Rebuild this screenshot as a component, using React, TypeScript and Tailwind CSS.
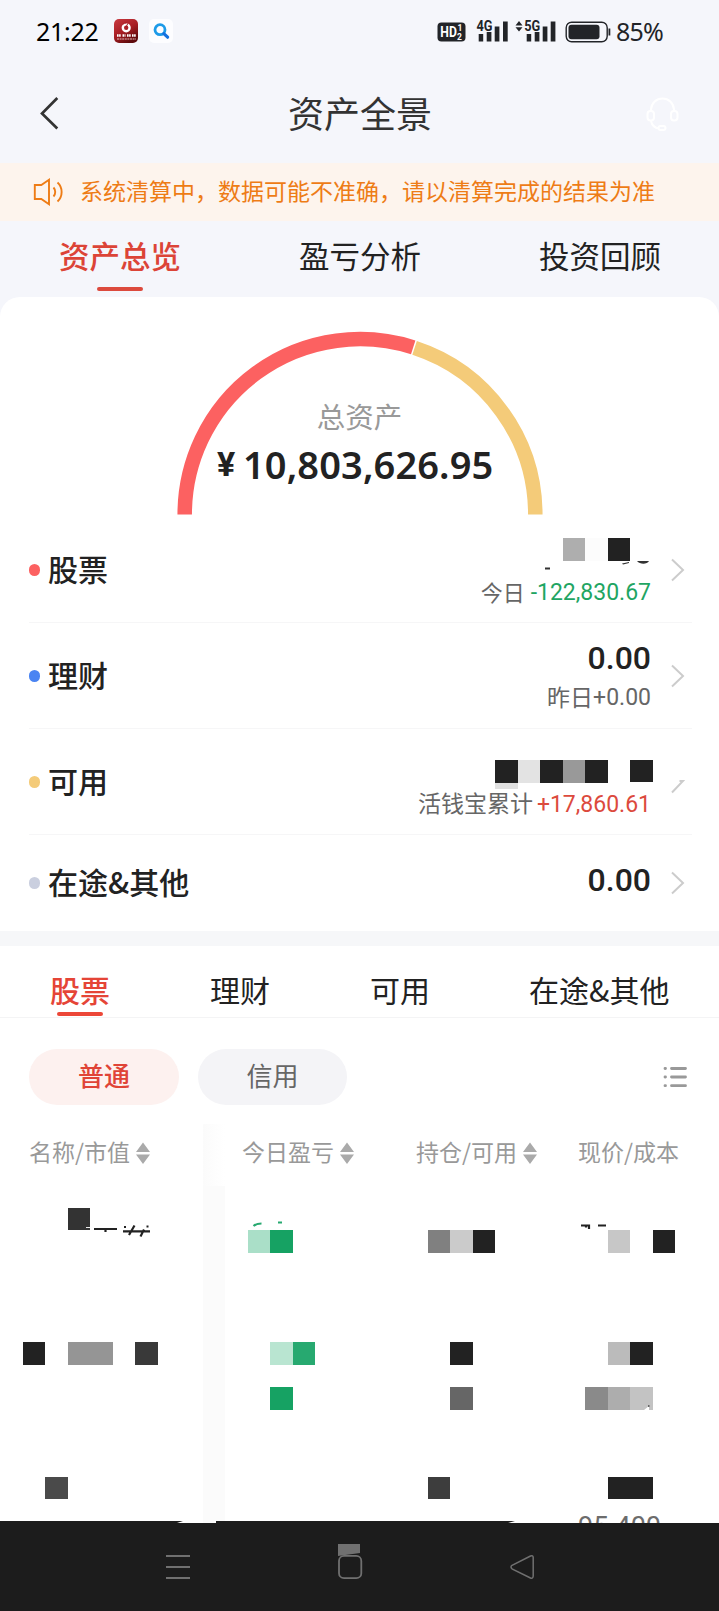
import type { ReactNode } from 'react'
import clsx from 'clsx'

const TABS = ['资产总览', '盈亏分析', '投资回顾']

// Masked figures are drawn as strips of blocks
const MASK_ROWS = [
  {
    row: 'mt-[29px] h-[22px]',
    blocks: ['ml-[68px] w-[22px] bg-[#333333]'],
  },
  {
    row: 'h-[23px]',
    blocks: [
      'ml-[248px] w-[22px] bg-[#aadfc8]',
      'w-[23px] bg-[#16a263]',
      'ml-[135px] w-[22px] bg-[#808080]',
      'w-[23px] bg-[#cbcbcb]',
      'w-[22px] bg-[#222222]',
      'ml-[113px] w-[22px] bg-[#c7c7c7]',
      'ml-[23px] w-[22px] bg-[#222222]',
    ],
  },
  {
    row: 'mt-[89px] h-[23px]',
    blocks: [
      'ml-[23px] w-[22px] bg-[#222222]',
      'ml-[23px] w-[45px] bg-[#959595]',
      'ml-[22px] w-[23px] bg-[#393939]',
      'ml-[112px] w-[23px] bg-[#b9e5d1]',
      'w-[22px] bg-[#27a970]',
      'ml-[135px] w-[23px] bg-[#222222]',
      'ml-[135px] w-[22px] bg-[#bbbbbb]',
      'w-[23px] bg-[#222222]',
    ],
  },
  {
    row: 'mt-[22px] h-[23px]',
    blocks: [
      'ml-[270px] w-[23px] bg-[#16a263]',
      'ml-[157px] w-[23px] bg-[#666666]',
      'ml-[112px] w-[23px] bg-[#8a8a8a]',
      'w-[22px] bg-[#adadad]',
      'w-[23px] bg-[#c3c3c3]',
    ],
  },
  {
    row: 'mt-[67px] h-[22px]',
    blocks: [
      'ml-[45px] w-[23px] bg-[#4a4a4a]',
      'ml-[360px] w-[22px] bg-[#3d3d3d]',
      'ml-[158px] w-[45px] bg-[#222222]',
    ],
  },
]

function StatusBar() {
  return (
    <div className="flex h-[62px] items-center pl-[36px]">
      <span className="w-[78px] whitespace-nowrap text-[25px] leading-none tracking-[-0.3px] text-black font-['Noto_Sans','Noto_Sans_CJK_SC',sans-serif]">21:22</span>
      <svg width="24" height="24" viewBox="0 0 24 24" className="shrink-0">
        <defs>
          <linearGradient id="appRed" x1="0" y1="0" x2="0.6" y2="1">
            <stop offset="0" stopColor="#c93a40" />
            <stop offset="0.55" stopColor="#a81e24" />
            <stop offset="1" stopColor="#5e0a0c" />
          </linearGradient>
        </defs>
        <rect width="24" height="24" rx="5" fill="url(#appRed)" />
        <circle cx="12.2" cy="8.8" r="3.4" fill="none" stroke="#fff" strokeWidth="2.4" />
        <path d="M8.6 5.5a5 5 0 0 1 4-1.6M12 8l2-3.8" stroke="#a81e24" strokeWidth="1" fill="none" />
        <path d="M3 16.5h4M8.5 16.5h3M13 16.5h4M18 16.5h4" stroke="#fff" strokeWidth="2.6" strokeDasharray="1.6 0.5" />
        <path d="M3 20h19" stroke="#e8b8b8" strokeWidth="1" strokeDasharray="2 0.6" />
      </svg>
      <svg width="24" height="24" viewBox="0 0 24 24" className="ml-[11px] shrink-0">
        <rect width="24" height="24" rx="5" fill="#fdfdff" />
        <circle cx="11" cy="10.7" r="5" fill="none" stroke="#1e9be8" strokeWidth="2.8" />
        <path d="M14.8 14.6l3.8 3.6" stroke="#1471e0" strokeWidth="3.2" strokeLinecap="round" />
      </svg>
      <svg width="175" height="30" viewBox="0 0 175 30" className="mt-px ml-[264px] shrink-0" fill="#222428" fontFamily="Roboto, sans-serif">
        <rect x="0.5" y="5.5" width="28" height="19" rx="4" />
        <text x="3.3" y="20.3" fontSize="15" fontWeight="700" fill="#fff" textLength="16.5" lengthAdjust="spacingAndGlyphs">HD</text>
        <text x="20.5" y="14.3" fontSize="8.5" fontWeight="700" fill="#fff">1</text>
        <text x="20" y="23" fontSize="8.5" fontWeight="700" fill="#fff">2</text>
        <text x="39.5" y="13.5" fontSize="14" fontWeight="700" textLength="16" lengthAdjust="spacingAndGlyphs">4G</text>
        <rect x="41.7" y="17" width="4.5" height="7.5" />
        <rect x="49.7" y="15" width="4.7" height="9.5" />
        <rect x="57.7" y="9.5" width="4.7" height="15" />
        <rect x="66" y="4.5" width="4.7" height="20" />
        <path d="M78.5 8.5L82 4l3.500 4.500zM78.500 10.200L82 14.500l3.500-4.300z" />
        <text x="87.3" y="13.5" fontSize="14" fontWeight="700" textLength="16" lengthAdjust="spacingAndGlyphs">5G</text>
        <rect x="89.7" y="17" width="4.5" height="7.5" />
        <rect x="97.7" y="15" width="4.7" height="9.5" />
        <rect x="105.7" y="9.5" width="4.7" height="15" />
        <rect x="113.7" y="4.5" width="4.7" height="20" />
        <rect x="129.2" y="5.2" width="41" height="19.6" rx="5.5" fill="none" stroke="#222428" strokeWidth="1.4" />
        <rect x="131.500" y="7.700" width="31" height="14.500" rx="3" />
        <rect x="171.500" y="11.500" width="1.800" height="7" />
      </svg>
      <span className="ml-[4px] text-[25px] leading-none tracking-[-0.8px] text-[#222428] font-['Noto_Sans',sans-serif]">85%</span>
    </div>
  )
}

function Header() {
  return (
    <div className="mt-[2px] flex h-[99px] items-center justify-between pr-[39px] pl-[40px]">
      <svg width="34" height="34" viewBox="0 0 34 34" fill="none" stroke="#333" strokeWidth="2.7">
        <path d="M17.3 1L2 16.5L17.3 31.5" />
      </svg>
      <h1 className="pb-[4px] text-[36px] leading-none text-[#333333]">资产全景</h1>
      <svg width="34" height="34" viewBox="0 0 34 34" fill="none" stroke="#fff" strokeWidth="2">
        <path d="M5 14V12.5C5.5 6 10.5 1.5 16.5 1.5S27.5 6 28 12.5V14" />
        <rect x="1.5" y="14" width="6.5" height="9.5" rx="3" />
        <rect x="25" y="14" width="6.5" height="9.5" rx="3" />
        <path d="M5 24c1 4.5 4 7 8 7.5" />
        <rect x="12.5" y="29" width="7" height="4" rx="2" />
      </svg>
    </div>
  )
}

function Notice() {
  return (
    <div className="flex h-[58px] items-center bg-[#fdf4ed] pl-[33px] text-[#ee7c16]">
      <svg width="32" height="28" viewBox="0 0 32 28" fill="none" stroke="currentColor" strokeWidth="1.9">
        <path d="M1.8 7h6.500L16 1.800v24.400L8.300 21H1.800z" />
        <path d="M20.5 9.5c2.300 2.500 2.300 6.500 0 9M24.500 4.500c5.500 5 5.500 14 0 19" />
      </svg>
      <span className="ml-[15px] pb-[4px] whitespace-nowrap text-[23px] leading-none">系统清算中，数据可能不准确，请以清算完成的结果为准</span>
    </div>
  )
}

function AssetGauge() {
  return (
    <div className="relative h-[220px]">
      <svg width="719" height="220" viewBox="0 0 719 220" fill="none" strokeWidth="14.5">
        <path d="M184.7 217.5A175.3 175.3 0 0 1 413.2 50.4" stroke="#fc6161" />
        <path d="M414.6 50.9A175.3 175.3 0 0 1 535.3 217.500" stroke="#f4cb79" />
      </svg>
      <div className="absolute inset-x-0 top-[104px] text-center text-[28.5px] leading-[30px] text-[#999999]">总资产</div>
      <div className="absolute top-[145px] left-[217px] flex items-baseline whitespace-nowrap leading-[44px] font-semibold text-[#222222]">
        <span className="relative -top-[3px] w-[26px] text-[34px] font-bold tracking-tight font-['Roboto',sans-serif]">¥</span>
        <span className="text-[38px] tracking-[0.1px] font-['Noto_Sans',sans-serif]">10,803,626.95</span>
      </div>
    </div>
  )
}

function Chevron({ cut = false }: { cut?: boolean }) {
  return (
    <svg width="14" height="24" viewBox="0 0 14 24" fill="none" stroke="#cccccc" strokeWidth="2">
      <path d={cut ? 'M8.5 11h3.500L1 22.500' : 'M1 1.500L12 12L1 22.500'} />
    </svg>
  )
}

function AssetRow({ label, dot, last, cut, children }: {
  label: string
  dot: string
  last?: boolean
  cut?: boolean
  children: ReactNode
}) {
  return (
    <div className={clsx('mr-[27px] ml-[29px] flex items-center', last ? 'h-[96px]' : 'h-[106px] border-b border-[#f6f6f7]')}>
      <i className={clsx('h-3 w-[11px] rounded-full', dot)} />
      <span className="ml-[8px] pb-[4px] text-[30px] leading-none font-medium text-[#222222]">{label}</span>
      <div className="ml-auto flex flex-col items-end">{children}</div>
      <div className="ml-5 w-[21px]">
        <Chevron cut={cut} />
      </div>
    </div>
  )
}

function AssetList() {
  return (
    <div>
      <AssetRow label="股票" dot="bg-[#fc6161]">
        <div className="mt-[3px] flex h-[23px] w-[88px]">
          <i className="w-[22px] bg-[#aeaeae]" />
          <i className="w-[23px] bg-[#fcfcfc]" />
          <i className="w-[22px] bg-[#222222]" />
        </div>
        <svg width="110" height="10" viewBox="0 0 110 10" fill="#333">
          <path d="M4 6.500h5v2H4zM81 2.500l7-1.500v1l-6 1.500zM96 0h12c-2 3.500-9 3.500-12 0z" />
        </svg>
        <div className="mt-[9px] flex items-center text-[23px] leading-none">
          <span className="mr-[6px] pb-[2px] text-[22px] text-[#666666]">今日</span>
          <span className="font-['Roboto',sans-serif] text-[#1fa563]">-122,830.67</span>
        </div>
      </AssetRow>
      <AssetRow label="理财" dot="bg-[#4a84f2]">
        <span className="text-[32px] leading-none font-medium text-[#222222] font-['Roboto',sans-serif]">0.00</span>
        <div className="mt-[11px] flex items-center text-[23px] leading-none text-[#666666]">
          <span className="pb-[2px]">昨日</span>
          <span className="font-['Roboto',sans-serif]">+0.00</span>
        </div>
      </AssetRow>
      <AssetRow label="可用" dot="bg-[#f4cb79]" cut>
        <div className="mt-[14px] -mr-[2px] flex h-[23px] w-[158px]">
          <i className="w-[23px] bg-[#222222]" />
          <i className="w-[22px] bg-[#e3e3e3]" />
          <i className="w-[23px] bg-[#222222]" />
          <i className="w-[22px] bg-[#999999]" />
          <i className="w-[23px] bg-[#222222]" />
          <i className="ml-[22px] h-[22px] w-[23px] bg-[#222222]" />
        </div>
        <i className="mr-[133px] h-[6px] w-[23px] bg-[#e0e0e0]" />
        <div className="mt-[2px] flex items-center text-[23px] leading-none">
          <span className="mr-[4px] pb-[3px] text-[#666666]">活钱宝累计</span>
          <span className="font-['Roboto',sans-serif] text-[#dc4a3d]">+17,860.61</span>
        </div>
      </AssetRow>
      <AssetRow label="在途&其他" dot="bg-[#cacfdf]" last>
        <span className="-mt-[7px] text-[32px] leading-none font-medium text-[#222222] font-['Roboto',sans-serif]">0.00</span>
      </AssetRow>
    </div>
  )
}

function SortIcon() {
  return (
    <svg width="14" height="22" viewBox="0 0 14 22" fill="#aaaaaa" className="mt-[3px] ml-[6px]">
      <path d="M0 10L7 0.500L14 10zM0 12.500L7 22L14 12.500z" />
    </svg>
  )
}

function Holdings() {
  return (
    <div className="relative h-[418px] overflow-hidden">
      {/* edge shadow of the pinned first column */}
      <div className="absolute top-[19px] left-[203px] h-[62px] w-[22px] bg-linear-to-r from-[#fbfbfb] to-white" />
      <div className="absolute top-[81px] left-[203px] h-[337px] w-[22px] bg-[#fbfbfb]" />

      <div className="relative flex h-[74px] items-end text-[23px] leading-none whitespace-nowrap text-[#999999]">
        <div className="ml-[29px] flex h-[56px] w-[213px] items-center">名称/市值<SortIcon /></div>
        <div className="flex h-[56px] w-[174px] items-center">今日盈亏<SortIcon /></div>
        <div className="flex h-[56px] w-[162px] items-center">持仓/可用<SortIcon /></div>
        <div className="flex h-[56px] items-center">现价/成本</div>
      </div>

      <div className="relative">
        {MASK_ROWS.map((r, i) => (
          <div key={i} className={clsx('flex', r.row)}>
            {r.blocks.map((b, j) => (
              <i key={j} className={clsx('shrink-0', b)} />
            ))}
          </div>
        ))}
      </div>

      {/* slivers of text left outside the masked blocks */}
      <svg width="719" height="30" viewBox="0 0 719 30" fill="none" stroke="#222" strokeWidth="2.2" className="absolute top-[112px] left-0">
        <path d="M94 12h23M105.500 12v3M123 14.300h27M129 18l5.500-9.500M140.500 19.500l3.500-7M124 10h2M146.500 9.500h2" />
        <path d="M86 10.500h4" stroke="#eee" strokeWidth="1" />
        <path d="M253.500 9q3-2.500 8-2.500M278 5.500h4" stroke="#27a970" />
        <path d="M581 8.500h8v3.500M586 8.500v2M598 8.500h8" />
      </svg>
      <svg width="8" height="5" viewBox="0 0 8 5" className="absolute top-[300px] left-[644px]">
        <path d="M0 5L5 1V5z" fill="#fff" />
        <path d="M4 0h1.500v2H4z" fill="#666" />
      </svg>
      <div className="absolute top-[407px] left-[578px] text-[27px] leading-[30px] text-[#6c6c6c] font-['Roboto',sans-serif]">95.400</div>
      <svg width="719" height="2" viewBox="0 0 719 2" fill="#1c1c1c" className="absolute bottom-0 left-0">
        <path d="M0 0H183L177 2H0zM216 0H515L508 2H216z" />
      </svg>
    </div>
  )
}

function NavBar() {
  return (
    <div className="h-[88px] bg-[#1c1c1c]">
      <svg width="719" height="88" viewBox="0 0 719 88" fill="none" stroke="#707070" strokeWidth="1.8">
        <path d="M166 33h24M166 44h24M166 55h24" />
        <path d="M338 21h22v9l-22 3z" fill="#707070" stroke="none" />
        <rect x="339" y="32.9" width="22.3" height="22.3" rx="5" fill="#1c1c1c" />
        <path d="M512 42.300L530.500 33q2.500-1 2.700 1.500V53q-.2 3-2.700 2L512 45.800q-2-1.800 0-3.500z" strokeWidth="1.5" />
      </svg>
    </div>
  )
}

export default function App() {
  return (
    <div className="h-[1611px] w-[719px] overflow-hidden bg-[#f5f6fb] font-['Noto_Sans_CJK_SC',sans-serif]">
      <StatusBar />
      <Header />
      <Notice />

      <div className="flex h-[76px] w-[720px]">
        {TABS.map((tab, i) => (
          <div key={tab} className="flex flex-1 flex-col items-center">
            <span className={clsx('mt-[19px] text-[30.5px] leading-[30px]', i === 0 ? 'font-medium text-[#dc4437]' : 'text-[#222222]')}>{tab}</span>
            {i === 0 && <i className="mt-[17px] h-1 w-[46px] rounded-full bg-[#dc4a3d]" />}
          </div>
        ))}
      </div>

      <div className="rounded-t-[20px] bg-white">
        <AssetGauge />
        <AssetList />
      </div>
      <div className="h-[15px] bg-[#f6f7f9]" />

      <div className="bg-white">
        <div className="flex h-[72px] border-b border-[#f4f4f5] pl-[50px] text-[30px] leading-[30px] text-[#222222]">
          <div className="flex w-[160px] flex-col font-medium text-[#e54537]">
            <span className="mt-[28px]">股票</span>
            <i className="mt-[8px] ml-[7px] h-1 w-[46px] rounded-full bg-[#ec4738]" />
          </div>
          <span className="mt-[28px] w-[160px]">理财</span>
          <span className="mt-[28px] w-[159px]">可用</span>
          <span className="mt-[28px]">在途&其他</span>
        </div>

        <div className="flex items-center pt-[31px] pr-[32px] pl-[29px] text-[26px] leading-none">
          <button className="h-14 w-[150px] rounded-full bg-[#fdf1ef] pb-[4px] font-medium text-[#e04437]">普通</button>
          <button className="ml-[19px] h-14 w-[149px] rounded-full bg-[#f4f4f7] pb-[4px] text-[#666666]">信用</button>
          <svg width="24" height="22" viewBox="0 0 24 22" stroke="#999999" strokeWidth="2.8" strokeLinecap="round" className="ml-auto">
            <path d="M2 2.500h.5M8.500 2.500h14M2 11h.5M8.500 11h14M2 19.700h.5M8.500 19.700h14" />
          </svg>
        </div>

        <Holdings />
      </div>

      <NavBar />
    </div>
  )
}
